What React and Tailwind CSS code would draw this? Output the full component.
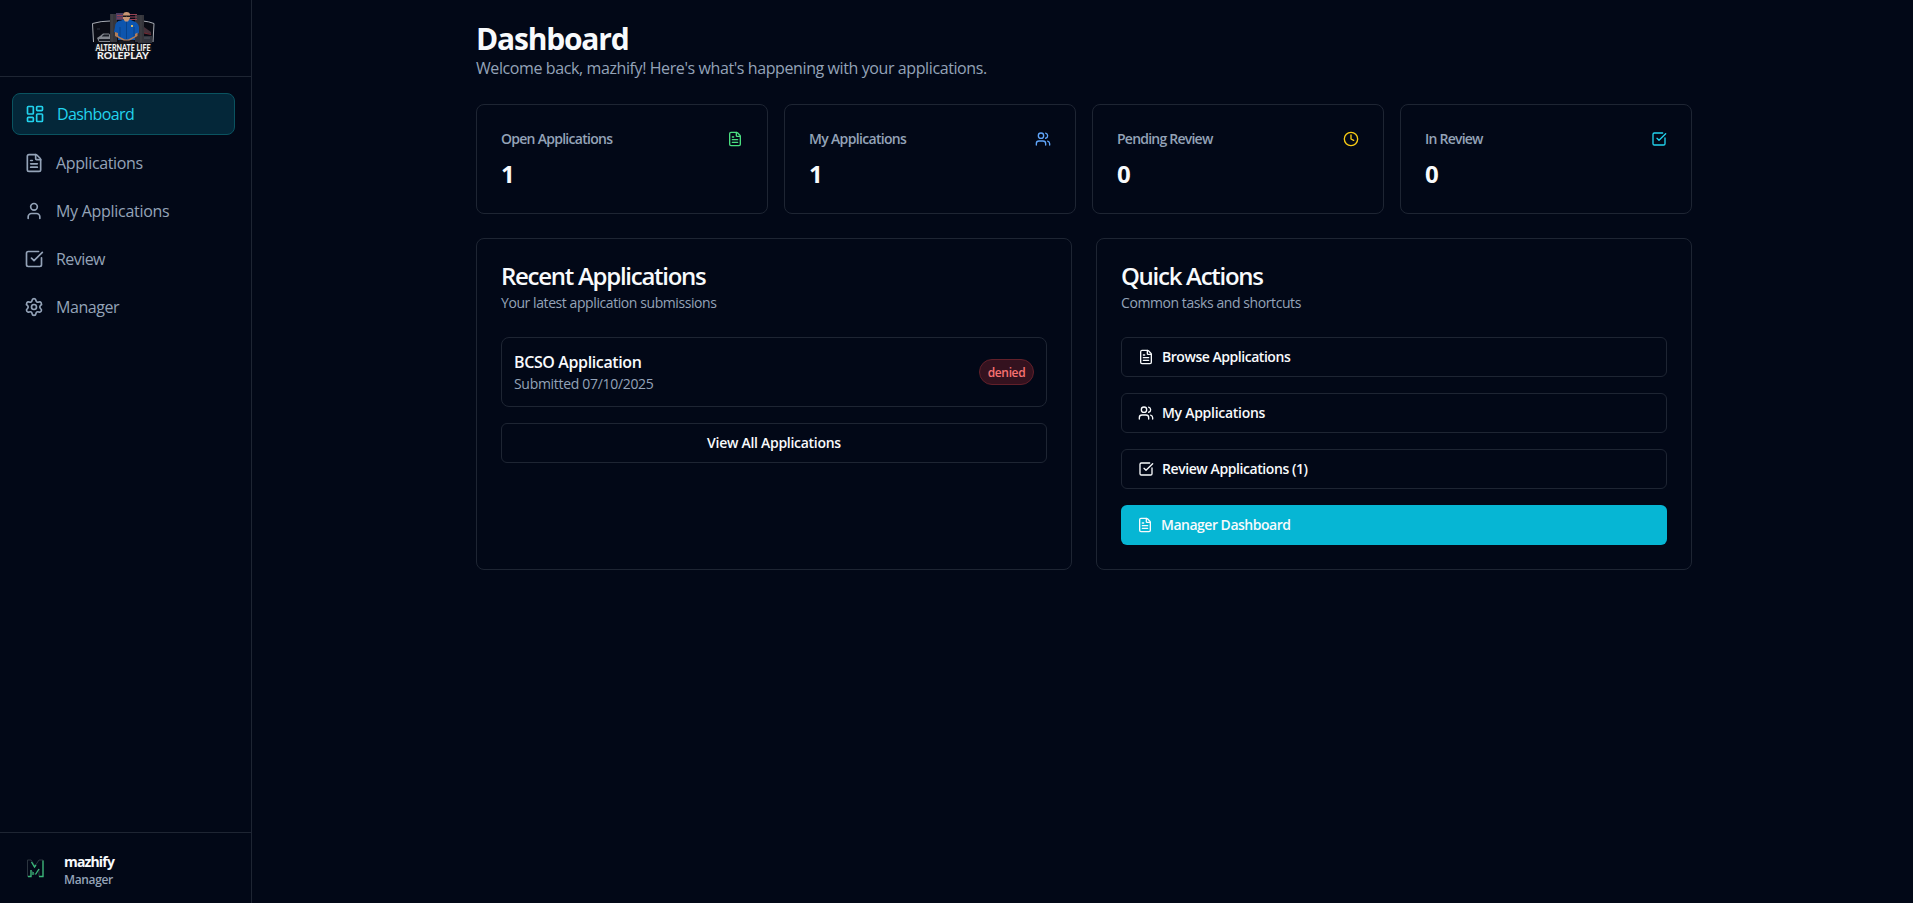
import { LayoutDashboard, FileText, User, Users, Settings, Clock } from "lucide-react";

function SquareCheck({ className }) {
  return (
    <svg className={className} viewBox="0 0 24 24" fill="none" stroke="currentColor" strokeWidth="2" strokeLinecap="round" strokeLinejoin="round">
      <path d="M21 10.500V19a2 2 0 0 1-2 2H5a2 2 0 0 1-2-2V5a2 2 0 0 1 2-2h12.500" />
      <path d="m9 11 3 3L22 4" />
    </svg>
  );
}

function Logo() {
  return (
    <svg className="h-[58px] w-[72px] overflow-visible" viewBox="-4 -2 72 58" role="img" aria-label="Alternate Life Roleplay">
      {/* frame */}
      <path d="M19 10 8 10.500Q1 12 1 14L2 32H62L63 14Q63 12 56 10.500L52 10Z" fill="#0a0c15" />
      <path d="M19 10Q10 10 1.500 12.500L2.500 31M52 10Q58 10.500 63 12.500L62 31" fill="none" stroke="#a9adb5" strokeWidth="1" />
      {/* patrol car */}
      <path d="M6 27 9 25 12 22.500H18L20 25V31H8Z" fill="#83868e" />
      <path d="M11 25 13 23.500H18V25.500H11ZM8 28H19V30H8Z" fill="#191c25" />
      <path d="M6 18H9" stroke="#303542" />
      {/* station */}
      <path d="M48 17 53 16 60 21V23L48 21Z" fill="#46313a" />
      <path d="M48 21 60 23.500" stroke="#8f3038" strokeWidth=".8" />
      <path d="M47 25H61V32H47Z" fill="#30333d" />
      <path d="M49 27H59" stroke="#51545d" />
      {/* pillars and flag */}
      <path d="M19 3H26V31H19Z" fill="#36363c" />
      <path d="M21 3V31" stroke="#4d4c51" strokeWidth=".8" />
      <path d="M44 4H53V31H44Z" fill="#35353b" />
      <path d="M50 4V31" stroke="#47464c" strokeWidth=".8" />
      <path d="M25 2H32V9H25Z" fill="#4b3c61" />
      <path d="M26 4.500H32M26 7H32M38 3.500H46M38 6H46M38 8.500H46" stroke="#974253" strokeWidth="1.200" />
      {/* officer */}
      <path d="M24 16Q24 10 30 9.500L34 8H38L42 10Q47 11 48 16L48 22 44 24V29H27V23L23 21Z" fill="#0d55ae" />
      <path d="M29 16V27M43 16V26M35.500 11V28" stroke="#083d80" strokeWidth=".8" />
      <path d="M24 21 24 25 33 30H38L46.500 25 46.500 21.500 44 23V25L37 28.500H34L27 25V22Z" fill="#b27e5b" />
      <path d="M40 14H42V16H40Z" fill="#d8ba65" />
      <path d="M32 4Q32 1 35.500 1Q39 1 39 4V7L37 10.500H34L32 7.500Z" fill="#c99674" />
      <path d="M32 4.500H39V6H36L35.500 5.500 35 6H32Z" fill="#15151a" />
      <path d="M28 29.500H43V33H28Z" fill="#171820" />
      {/* name plate */}
      <path d="M4 33 32 31 60 33 61 40 57 41V49H6V41L3 40Z" fill="#15161b" />
      <text x="32" y="40" textAnchor="middle" textLength="55" lengthAdjust="spacingAndGlyphs" fill="#f1f1f1" className="font-['Lato',sans-serif] text-[9px] font-black">ALTERNATE LIFE</text>
      <text x="32" y="47.700" textAnchor="middle" textLength="52" lengthAdjust="spacingAndGlyphs" fill="#f1f1f1" className="font-['Lato',sans-serif] text-[9px] font-black">ROLEPLAY</text>
    </svg>
  );
}

const nav = [
  { label: "Applications", icon: FileText, tracking: "tracking-[-0.023em]" },
  { label: "My Applications", icon: User, tracking: "tracking-[-0.018em]" },
  { label: "Review", icon: SquareCheck, tracking: "tracking-[-0.035em]" },
  { label: "Manager", icon: Settings, tracking: "tracking-[-0.027em]" },
];

const stats = [
  { label: "Open Applications", value: 1, icon: FileText, color: "text-[#4ade80]", tracking: "tracking-[-0.052em]" },
  { label: "My Applications", value: 1, icon: Users, color: "text-[#60a5fa]", tracking: "tracking-[-0.048em]" },
  { label: "Pending Review", value: 0, icon: Clock, color: "text-[#facc15]", tracking: "tracking-[-0.055em]" },
  { label: "In Review", value: 0, icon: SquareCheck, color: "text-[#22d3ee]", tracking: "tracking-[-0.055em]" },
];

const actions = [
  { label: "Browse Applications", icon: FileText, tracking: "tracking-[-0.033em]" },
  { label: "My Applications", icon: Users, tracking: "tracking-[-0.02em]" },
  { label: "Review Applications (1)", icon: SquareCheck, tracking: "tracking-[-0.03em]" },
];

function Panel({ title, subtitle, children }) {
  return (
    <section className="h-[332px] rounded-lg border border-[#1e2533] px-6 pt-[25px] pb-6">
      <h2 className="text-2xl leading-6 font-semibold tracking-[-0.053em]">{title}</h2>
      <p className="mt-[5px] text-sm tracking-[-0.03em] text-[#94a3b8]">{subtitle}</p>
      <div className="mt-6 flex flex-col gap-4">{children}</div>
    </section>
  );
}

export default function App() {
  return (
    <div className="flex h-screen overflow-hidden bg-[#020817] font-['Open_Sans','Noto_Sans',sans-serif] text-[#f8fafc]">
      <aside className="flex w-[252px] shrink-0 flex-col border-r border-[#1e2533]">
        <div className="flex h-[77px] items-start justify-center border-b border-[#1e2533] pt-[9px] pr-1.5">
          <Logo />
        </div>
        <nav className="flex flex-1 flex-col gap-2 pt-4 pr-4 pl-3 text-[#94a3b8]">
          <a className="flex h-[42px] items-center gap-3 rounded-lg border border-[#0a5360] bg-[#042739] px-3 tracking-[-0.037em] text-[#22d3ee]">
            <LayoutDashboard className="size-5" />
            Dashboard
          </a>
          {nav.map(({ label, icon: Icon, tracking }) => (
            <a key={label} className={`flex h-10 items-center gap-3 px-3 ${tracking}`}>
              <Icon className="size-5" />
              {label}
            </a>
          ))}
        </nav>
        <div className="flex h-[71px] items-center border-t border-[#1e2533] pl-[25px]">
          <svg className="size-5" viewBox="0 0 20 20" fill="none">
            <path d="M2.500 2H6L10 8 14 2H18V18.500H14V11L10 16.500 6 12V18.500H2.500Z" stroke="#2c353f" strokeWidth="1" />
            <path d="M18 2.500V18.500H14M14 11 10.500 16.500M6 12V18.500H3M6.500 4 9.500 9 11 7M8 14V17" stroke="#38b879" strokeWidth="1.300" />
          </svg>
          <div className="ml-[19px] pt-1.5">
            <div className="text-sm leading-[18px] font-bold tracking-[-0.06em]">mazhify</div>
            <div className="text-xs leading-[18px] font-semibold tracking-[-0.03em] text-[#94a3b8]">Manager</div>
          </div>
        </div>
      </aside>

      <main className="flex-1 pt-[22px] pl-56">
        <div className="w-[1216px]">
          <h1 className="text-3xl leading-[34px] font-bold tracking-[-0.04em]">Dashboard</h1>
          <p className="tracking-[-0.025em] text-[#94a3b8]">Welcome back, mazhify! Here's what's happening with your applications.</p>

          <div className="mt-6 grid grid-cols-4 gap-4">
            {stats.map(({ label, value, icon: Icon, color, tracking }) => (
              <section key={label} className="h-[110px] rounded-lg border border-[#1e2533] p-6">
                <div className="flex items-center justify-between">
                  <h3 className={`text-sm font-semibold text-[#94a3b8] ${tracking}`}>{label}</h3>
                  <Icon className={`size-4 ${color}`} />
                </div>
                <div className="mt-[9px] text-2xl font-bold">{value}</div>
              </section>
            ))}
          </div>

          <div className="mt-6 grid grid-cols-2 gap-6">
            <Panel title="Recent Applications" subtitle="Your latest application submissions">
              <div className="flex items-center justify-between rounded-lg border border-[#1e2533] p-3">
                <div>
                  <h4 className="font-semibold tracking-[-0.024em]">BCSO Application</h4>
                  <p className="text-sm tracking-[-0.022em] text-[#94a3b8]">Submitted 07/10/2025</p>
                </div>
                <span className="flex h-[26px] w-[55px] items-center justify-center rounded-full border border-[#62202a] bg-[#34121f] pt-px text-xs font-semibold tracking-[-0.03em] text-[#f87171]">denied</span>
              </div>
              <button className="h-10 rounded-md border border-[#1e2533] text-sm font-semibold tracking-[-0.02em]">View All Applications</button>
            </Panel>

            <Panel title="Quick Actions" subtitle="Common tasks and shortcuts">
              {actions.map(({ label, icon: Icon, tracking }) => (
                <button key={label} className={`flex h-10 items-center gap-2 rounded-md border border-[#1e2533] px-4 text-sm font-semibold ${tracking}`}>
                  <Icon className="size-4" />
                  {label}
                </button>
              ))}
              <button className="flex h-10 items-center gap-2 rounded-md bg-[#06b6d4] px-4 text-sm font-semibold tracking-[-0.035em]">
                <FileText className="size-4" />
                Manager Dashboard
              </button>
            </Panel>
          </div>
        </div>
      </main>
    </div>
  );
}
